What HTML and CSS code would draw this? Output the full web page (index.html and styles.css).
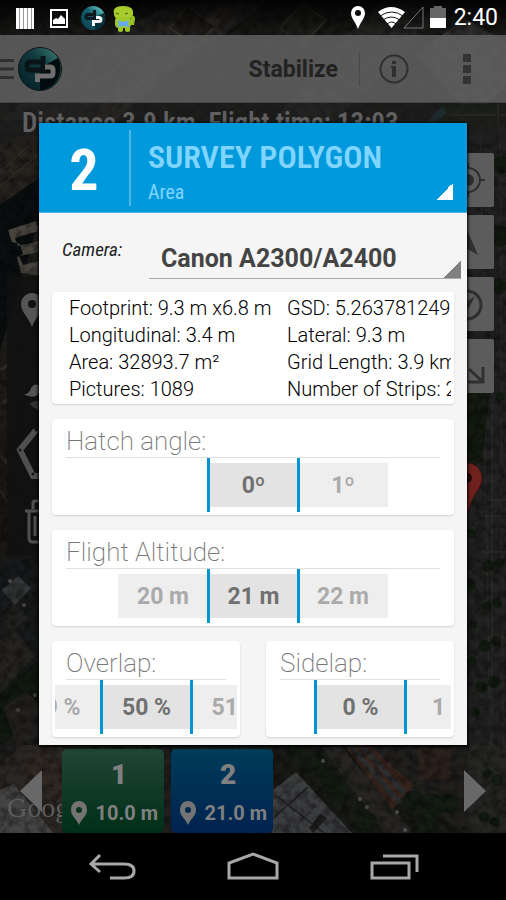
FILE: index.html
```
<!DOCTYPE html>
<html lang="en">
<head>
  <meta charset="UTF-8">
  <meta name="viewport" content="width=device-width, initial-scale=1.0">
  <title>DroidPlanner - Survey</title>
  <link rel="stylesheet" href="styles.css">
</head>
<body>
<div class="screen">

  <!-- Satellite map -->
  <svg class="map" viewBox="0 0 506 900" preserveAspectRatio="xMidYMid slice" aria-hidden="true">
    <defs>
      <linearGradient id="shade" x1="0" y1="0" x2="0" y2="1">
        <stop offset="0" stop-color="#000" stop-opacity=".9"/>
        <stop offset="1" stop-color="#000" stop-opacity="0"/>
      </linearGradient>
      <filter id="terrain" x="0" y="0" width="100%" height="100%">
        <feTurbulence type="fractalNoise" baseFrequency=".12" numOctaves="4" seed="7"/>
        <feColorMatrix values="0 0 0 0 0  0 0 0 0 0  0 0 0 0 0  2.4 0 0 0 -.9"/>
      </filter>
    </defs>
    <rect width="506" height="900" fill="#1c1c1a"/>
    <path d="M0 120 110 35 180 0h90L110 120z" fill="#2b2927"/>
    <path d="M85 125 225 0h22L110 125z" fill="#33302d"/>
    <path d="M95 125 232 0M104 125 240 0" stroke="#443f3a" stroke-width="1"/>
    <path d="M275 120 330 50 385 0h70L330 125z" fill="#2a2927"/>
    <path d="M170 28 187 6l28 20-19 20z" fill="#25221f" stroke="#3c372f" stroke-width="2"/>
    <path d="M280 28l22-24 24 16-24 26z" fill="#22231f" stroke="#32302a" stroke-width="2"/>
    <path d="M415 55 465 18 506 42v46l-35 27z" fill="#383634"/>
    <path d="M440 104h66v50h-66z" fill="#182012"/>
    <path d="M450 115h56M498 104v50" stroke="#34352c" stroke-width="2"/>
    <path d="M427 121l15-14 5 6-15 12z" fill="#1c4048"/>
    <path d="M0 145 39 128v52L0 205z" fill="#26221e"/>
    <path d="M0 172 39 136M0 186 39 154" stroke="#3b362f" stroke-width="1"/>
    <path d="M0 205 39 178v42L0 350z" fill="#0a0e0f"/>
    <path d="M8 230l28-9 3 10-24 7 3 8 21-5v11l-20 4 4 9 16-4v14l-18-2-4-16 6-3-3-10-8-2z" fill="#48443d"/>
    <path d="M0 350 39 320v90L0 435z" fill="#1d1a17"/>
    <path d="M0 371 39 341M0 405 39 374" stroke="#2d2924" stroke-width="3"/>
    <path d="M0 435 39 415v140L0 590z" fill="#1a1816"/>
    <path d="M0 455l39 45M0 490l28 45" stroke="#282521" stroke-width="3"/>
    <path d="M0 565 39 530v130L0 690z" fill="#17191a"/>
    <path d="M2 590l16-14 13 12-16 17z" fill="#333536"/>
    <path d="M0 618l14-14 14 13-17 16z" fill="#22211f"/>
    <path d="M0 640l16-10 18 27-34 36z" fill="#252320"/>
    <path d="M0 693l39-33v58L0 745z" fill="#10180f"/>
    <path d="M3 708l22-17 14 13v30L17 745z" fill="#22201e"/>
    <g fill="#4a463f"><circle cx="18" cy="710" r="2"/><circle cx="10" cy="581" r="2"/><circle cx="24" cy="605" r="2"/><circle cx="35" cy="695" r="2"/></g>
    <path d="M466 125h40v620h-40z" fill="#202120"/>
    <path d="M480 125l10 620M500 125l3 620" stroke="#2d2c2a" stroke-width="1"/>
    <path d="M466 391h24l-8 70-16 12z" fill="#151b10"/>
    <path d="M492 400v345M484 500h22M484 516h22M482 552h24" stroke="#33322e" stroke-width="1"/>
    <g fill="#121a10">
      <circle cx="501" cy="165" r="9"/><circle cx="499" cy="236" r="11"/><circle cx="499" cy="286" r="8"/><circle cx="500" cy="397" r="5"/>
      <circle cx="475" cy="421" r="9"/><circle cx="474" cy="448" r="8"/><circle cx="471" cy="534" r="5"/><circle cx="488" cy="566" r="6"/>
      <circle cx="500" cy="563" r="5"/><circle cx="470" cy="585" r="6"/><circle cx="487" cy="607" r="5"/><circle cx="497" cy="603" r="5"/>
      <circle cx="485" cy="646" r="6"/><circle cx="496" cy="641" r="5"/><circle cx="481" cy="687" r="6"/><circle cx="494" cy="682" r="6"/>
      <circle cx="475" cy="712" r="5"/><circle cx="473" cy="625" r="4"/><circle cx="472" cy="662" r="5"/>
    </g>
    <path d="M0 745h506v88H0z" fill="#201f1e"/>
    <path d="M0 765l22-20h41v88H46L16 790 0 806z" fill="#2b2724"/>
    <path d="M0 790l14-6 39 49H0z" fill="#444445"/>
    <path d="M20 770l20-22 22 18v38z" fill="#302823"/>
    <path d="M272 747h80l110 86H272z" fill="#181a16"/>
    <path d="M272 791l24-19 56 61h-80z" fill="#3c3d3f"/>
    <path d="M278 797l46 36M272 819l36-32" stroke="#262728" stroke-width="2"/>
    <path d="M309 828l11-14 7 4-14 15z" fill="#1b1b1c"/>
    <path d="M322 747h20l72 86h-30z" fill="#262523"/>
    <path d="M344 745l25 0 45 40-22 24z" fill="#38251e"/>
    <path d="M350 745l50 58M361 745l43 48" stroke="#2c2d2f" stroke-width="5"/>
    <path d="M418 748h33v32h-33z" fill="#2b211d"/>
    <path d="M469 745h37v88h-37z" fill="#252523"/>
    <g fill="#131b12">
      <circle cx="316" cy="765" r="10"/><circle cx="329" cy="777" r="9"/><circle cx="337" cy="791" r="10"/><circle cx="365" cy="822" r="12"/>
      <circle cx="414" cy="801" r="10"/><circle cx="431" cy="806" r="13"/><circle cx="425" cy="824" r="12"/><circle cx="449" cy="803" r="10"/>
      <circle cx="487" cy="774" r="5"/><circle cx="497" cy="780" r="6"/><circle cx="484" cy="817" r="5"/><circle cx="495" cy="822" r="5"/><circle cx="296" cy="747" r="8"/>
    </g>
    <g fill="#555"><circle cx="323" cy="761" r="2"/><circle cx="360" cy="799" r="2"/><circle cx="367" cy="807" r="2"/><circle cx="397" cy="812" r="2"/><circle cx="405" cy="830" r="2"/></g>
    <rect width="506" height="900" filter="url(#terrain)" opacity=".4"/>
    <rect width="506" height="40" fill="url(#shade)"/>
  </svg>

  <!-- Status bar -->
  <div class="status-bar">
    <svg class="notifications" viewBox="0 0 120 28" width="120" height="28" aria-hidden="true">
      <defs>
        <linearGradient id="teal" x1="1" y1="0" x2="0" y2="1">
          <stop offset="0" stop-color="#7fe0d8"/><stop offset=".45" stop-color="#12606e"/><stop offset="1" stop-color="#0a3c4a"/>
        </linearGradient>
      </defs>
      <path d="M0 4h18v21H0z" fill="#999"/>
      <path d="M0 4h3v21H0zM4 4h3v21H4zM8 4h3v21H8zM12 4h3v21h-3zM16 4h2v21h-2z" fill="#fff"/>
      <path d="M35 6h16v17H35z" fill="none" stroke="#fff" stroke-width="2"/>
      <path d="M37 20v-4l3-2 2 1 3-4 4 4v5z" fill="#fff"/>
      <circle cx="77" cy="14" r="12" fill="url(#teal)"/>
      <path d="M77 14l11-5a12 12 0 0 1-9 17z" fill="#04303a"/>
      <path d="M78.500 6v8.500H72q-2 0-2-2t2-2h6" fill="none" stroke="#0c181c" stroke-width="3"/>
      <path d="M77.500 22v-4.500H83q2 0 2-2t-2-2h-3" fill="none" stroke="#f4f4f4" stroke-width="3"/>
      <path d="M98 10q-2-8 9-8t10 8q0 4-4 5h-11q-4-1-4-5z" fill="#a8cc2c"/>
      <rect x="99" y="13" width="16" height="11" rx="4" fill="#a0c828"/>
      <path d="M115 12q4-1 4 3l-1 6h-4z" fill="#98c022"/>
      <path d="M102 22h5v5q-3 2-5 0zM109 22h5v5q-2 2-5 0z" fill="#9cc424"/>
      <path d="M100 9l3 1M109 10l3-1" stroke="#3c5c10"/>
      <path d="M101 16l6 2 6-2-1 4 2 3-7-1-6 1 2-3z" fill="#67a9f5"/>
    </svg>
    <svg class="signals" viewBox="0 0 98 28" width="98" height="28" aria-hidden="true">
      <path fill-rule="evenodd" d="M8 2a7 7 0 0 1 7 7c0 5-4 8-7 16C5 17 1 14 1 9a7 7 0 0 1 7-7zm0 4a3 3 0 1 0 0 6 3 3 0 0 0 0-6z" fill="#fff"/>
      <path d="M28 8q13-10 27 0L41.500 24z" fill="#fff"/>
      <path d="M30 12q12-8 23 0M33 16q8-6 17 0M37 20q5-4 9 0" fill="none" stroke="#111" stroke-width="1"/>
      <path d="M54 24h19V3z" fill="none" stroke="#777" stroke-width="1"/>
      <path d="M80 4h4V2h8v2h4v10H80z" fill="#666"/><path d="M80 14h16v10H80z" fill="#fff"/>
    </svg>
    <span class="clock">2:40</span>
  </div>

  <!-- Action bar -->
  <header class="action-bar">
    <button class="home-button" aria-label="Open drawer">
      <svg viewBox="0 0 64 46" width="64" height="46" aria-hidden="true">
        <defs>
          <linearGradient id="logo" x1=".9" y1=".1" x2=".1" y2=".8">
            <stop offset="0" stop-color="#37756e"/><stop offset=".4" stop-color="#123d40"/><stop offset="1" stop-color="#07242b"/>
          </linearGradient>
        </defs>
        <path d="M0 14.500h14M0 23h14M0 31.500h14" stroke="#303030" stroke-width="3"/>
        <circle cx="40" cy="23" r="21.500" fill="url(#logo)" stroke="#0a1518" stroke-width="1"/>
        <path d="M40 22l18-10a22 22 0 0 1-18 32z" fill="#020b0d"/>
        <path d="M43 10v14H30q-3 0-3-3v-2q0-3 3-3h13" fill="none" stroke="#0b1416" stroke-width="5"/>
        <path d="M37.500 36v-6H50q3 0 3-3v-3q0-3-3-3h-5" fill="none" stroke="#6e6e6e" stroke-width="5"/>
      </svg>
    </button>
    <button class="mode-button">Stabilize</button>
    <button class="info-button" aria-label="Info">
      <svg viewBox="0 0 30 30" width="30" height="30" aria-hidden="true">
        <circle cx="15" cy="15" r="13.500" fill="none" stroke="#303030" stroke-width="2"/>
        <path d="M13 7h4v3h-4zM12 12h5v11h-4v-9h-1z" fill="#303030"/>
      </svg>
    </button>
    <button class="more-button" aria-label="More options"><i></i><i></i><i></i></button>
  </header>

  <!-- Map area -->
  <main class="map-area">
    <p class="telemetry">Distance 3.9 km, Flight time: 13:03</p>

    <nav class="edit-tools" aria-label="Mission tools">
      <svg viewBox="0 0 60 280" width="60" height="280" aria-hidden="true">
        <path fill-rule="evenodd" d="M25 17c6 0 11 5 11 11 0 8-7 12-11 23-4-11-11-15-11-23 0-6 5-11 11-11zm0 7a4 4 0 1 0 0 8 4 4 0 0 0 0-8z" fill="#555"/>
        <path d="M16 118q6 1 8-6 3-5 8-3v8q-4 7-16 1z" fill="#555"/>
        <path d="M23 128q4-5 12-2v8q-7 0-12-6z" fill="#333"/>
        <path d="M29 154 13 174l13 26h20" fill="none" stroke="#505050" stroke-width="6"/>
        <g fill="#151515"><circle cx="29" cy="154" r="1.500"/><circle cx="13" cy="174" r="1.500"/><circle cx="26" cy="198" r="1.500"/></g>
        <path d="M18 235h35M26 233v-6q0-2 2-2h14M22 236v26q0 4 4 4h20M28 240v20M35 240v20" fill="none" stroke="#505050" stroke-width="3"/>
      </svg>
    </nav>

    <div class="map-tools">
      <button aria-label="My location"><svg viewBox="0 0 54 54" width="54" height="54" aria-hidden="true"><circle cx="28" cy="27" r="12" fill="none" stroke="#2e2e2e" stroke-width="2"/><circle cx="28" cy="27" r="6" fill="#2e2e2e"/><path d="M40 27h5M28 10v5M28 39v5M11 27h5" stroke="#2e2e2e" stroke-width="2"/></svg></button>
      <button aria-label="Drone location"><svg viewBox="0 0 54 54" width="54" height="54" aria-hidden="true"><path d="M24 8l14 32-14-8-14 8z" fill="#303030"/></svg></button>
      <button aria-label="Compass"><svg viewBox="0 0 54 54" width="54" height="54" aria-hidden="true"><circle cx="27" cy="28" r="14" fill="none" stroke="#303030" stroke-width="3"/><path d="M35 19l-6 12-11 7 7-12z" fill="#303030"/></svg></button>
      <button aria-label="Zoom to fit"><svg viewBox="0 0 54 54" width="54" height="54" aria-hidden="true"><path d="M28 43h15V28M43 43 29 30M11 28V12h15" fill="none" stroke="#303030" stroke-width="3"/></svg></button>
    </div>

    <svg class="map-marker" viewBox="0 0 32 54" width="32" height="54" aria-hidden="true">
      <path d="M16 1c9 0 15 7 15 15 0 12-11 16-14 36C14 32 1 28 1 16 1 8 7 1 16 1z" fill="#6e211d" stroke="#3c1210"/>
      <circle cx="16" cy="16" r="5" fill="#230808"/>
    </svg>
  </main>

  <!-- Mission list -->
  <section class="mission-list" aria-label="Mission items">
    <span class="attribution">Google</span>
    <button class="scroll-button" aria-label="Previous"><svg viewBox="0 0 22 42" width="22" height="42" aria-hidden="true"><path d="M22 0v42L0 21z" fill="#686868"/></svg></button>
    <ol class="mission-items">
      <li class="mission-item">
        <b>1</b>
        <span><svg viewBox="0 0 18 24" width="18" height="24" aria-hidden="true"><path fill-rule="evenodd" d="M9 0c5 0 8 4 8 9 0 6-5 8-8 15C6 17 1 15 1 9c0-5 3-9 8-9zm0 6a3 3 0 1 0 0 6 3 3 0 0 0 0-6z" fill="#747474"/></svg>10.0 m</span>
      </li>
      <li class="mission-item selected">
        <b>2</b>
        <span><svg viewBox="0 0 18 24" width="18" height="24" aria-hidden="true"><path fill-rule="evenodd" d="M9 0c5 0 8 4 8 9 0 6-5 8-8 15C6 17 1 15 1 9c0-5 3-9 8-9zm0 6a3 3 0 1 0 0 6 3 3 0 0 0 0-6z" fill="#747474"/></svg>21.0 m</span>
      </li>
    </ol>
    <button class="scroll-button" aria-label="Next"><svg viewBox="0 0 22 42" width="22" height="42" aria-hidden="true"><path d="M0 0v42l22-21z" fill="#686868"/></svg></button>
  </section>

  <!-- Navigation bar -->
  <nav class="nav-bar">
    <button aria-label="Back"><svg viewBox="0 0 54 30" width="54" height="30" aria-hidden="true"><path d="M16 3 7 12l9 8M7 12h33q10 0 10 7t-10 7H26" fill="none" stroke="#a8a8a8" stroke-width="3"/></svg></button>
    <button aria-label="Home"><svg viewBox="0 0 54 30" width="54" height="30" aria-hidden="true"><path d="M3 26V11L27 2l24 9v15z" fill="none" stroke="#a8a8a8" stroke-width="3"/></svg></button>
    <button aria-label="Recent apps"><svg viewBox="0 0 54 30" width="54" height="30" aria-hidden="true"><path d="M4 11h37v15H4zM15 4h34v16" fill="none" stroke="#a8a8a8" stroke-width="3"/></svg></button>
  </nav>

  <!-- Survey dialog -->
  <div class="overlay">
    <div class="dialog" role="dialog" aria-labelledby="dialogTitle">
      <div class="dialog-header">
        <span class="item-number">2</span>
        <div class="item-type">
          <h1 id="dialogTitle">SURVEY POLYGON</h1>
          <p>Area</p>
        </div>
        <button class="corner" aria-label="Change item type"></button>
      </div>

      <div class="dialog-body">
        <div class="camera-row">
          <label for="camera">Camera:</label>
          <div class="spinner">
            <select id="camera">
              <option>Canon A2300/A2400</option>
            </select>
          </div>
        </div>

        <div class="card details">
          <ul>
            <li>Footprint: 9.3 m x6.8 m</li>
            <li>Longitudinal: 3.4 m</li>
            <li>Area: 32893.7 m²</li>
            <li>Pictures: 1089</li>
          </ul>
          <ul>
            <li>GSD: 5.263781249</li>
            <li>Lateral: 9.3 m</li>
            <li>Grid Length: 3.9 km</li>
            <li>Number of Strips: 24</li>
          </ul>
        </div>

        <section class="card">
          <h2>Hatch angle:</h2>
          <div class="wheel">
            <span class="blank"></span>
            <button class="current">0º</button>
            <button>1º</button>
          </div>
        </section>

        <section class="card">
          <h2>Flight Altitude:</h2>
          <div class="wheel">
            <button>20 m</button>
            <button class="current">21 m</button>
            <button>22 m</button>
          </div>
        </section>

        <div class="card-row">
          <section class="card">
            <h2>Overlap:</h2>
            <div class="wheel">
              <button>49 %</button>
              <button class="current">50 %</button>
              <button>51 %</button>
            </div>
          </section>
          <section class="card">
            <h2>Sidelap:</h2>
            <div class="wheel">
              <span class="blank"></span>
              <button class="current">0 %</button>
              <button>1 %</button>
            </div>
          </section>
        </div>
      </div>
    </div>
  </div>

</div>
</body>
</html>
```

FILE: styles.css
```
* {
  box-sizing: border-box;
}

body {
  margin: 0;
  background: #000;
  font-family: Roboto, "Noto Sans", sans-serif;
}

h1, h2, p, ul, ol {
  margin: 0;
  padding: 0;
  list-style: none;
}

button {
  padding: 0;
  border: none;
  background: none;
  font-family: inherit;
  cursor: pointer;
}

svg {
  display: block;
}

.screen {
  position: relative;
  display: flex;
  flex-direction: column;
  min-height: 100vh;
  overflow: hidden;
}

.map {
  position: absolute;
  top: 0;
  left: 0;
  width: 100%;
  height: 100%;
  z-index: -1;
}

/* status bar */
.status-bar {
  display: flex;
  align-items: center;
  height: 35px;
  padding: 0 8px 0 16px;
  color: #fff;
}

.signals {
  margin-left: auto;
  margin-right: 6px;
}

.clock {
  font-size: 23px;
  line-height: 37px;
}

/* action bar */
.action-bar {
  display: flex;
  align-items: center;
  height: 68px;
  padding-right: 35px;
  background: rgba(98, 98, 98, 0.85);
  border-bottom: 1px solid #444;
}

.mode-button {
  height: 34px;
  margin-left: auto;
  padding: 2px 21px 0 0;
  border-right: 1px solid #484848;
  color: #222;
  font-size: 23px;
  font-weight: 700;
}

.info-button {
  margin: 0 54px 0 19px;
}

.more-button i {
  display: block;
  width: 8px;
  height: 8px;
  background: #333;
}

.more-button i + i {
  margin-top: 3px;
}

/* map area */
.map-area {
  position: relative;
  flex: 1;
}

.telemetry {
  height: 40px;
  padding-left: 22px;
  background: rgba(30, 30, 30, 0.6);
  color: #606060;
  font-family: "Roboto Condensed", "Liberation Sans Narrow", Roboto, sans-serif;
  font-size: 27px;
  font-weight: 600;
  line-height: 40px;
  white-space: nowrap;
}

.edit-tools {
  position: absolute;
  top: 173px;
  left: 7px;
  background: rgba(17, 17, 17, 0.85);
  border-radius: 4px;
}

.map-tools {
  position: absolute;
  top: 50px;
  right: 12px;
  display: flex;
  flex-direction: column;
  gap: 8px;
}

.map-tools button {
  background: #5c5c5c;
  border-radius: 2px;
}

.map-marker {
  position: absolute;
  top: 359px;
  right: 23px;
}

/* mission list */
.mission-list {
  position: relative;
  display: flex;
  align-items: center;
  height: 85px;
  padding: 0 20px;
}

.attribution {
  position: absolute;
  left: 7px;
  bottom: 9px;
  color: #5c5c5c;
  font-family: "Liberation Serif", serif;
  font-size: 28px;
  line-height: 32px;
}

.scroll-button {
  position: relative;
}

.mission-items {
  position: relative;
  display: flex;
  flex: 1;
  gap: 7px;
  padding-left: 20px;
}

.mission-item {
  width: 102px;
  height: 84px;
  padding-top: 8px;
  border-radius: 5px;
  background: linear-gradient(#214535, #002f17);
  color: #808080;
  font-weight: 700;
}

.mission-item.selected {
  background: linear-gradient(#003c59, #002250);
}

.mission-item b {
  display: block;
  padding-left: 12px;
  font-size: 28px;
  line-height: 36px;
  text-align: center;
}

.mission-item span {
  display: flex;
  align-items: center;
  justify-content: space-between;
  padding: 0 6px 0 8px;
  font-size: 20px;
  line-height: 40px;
}

/* navigation bar */
.nav-bar {
  display: flex;
  align-items: center;
  justify-content: center;
  gap: 88px;
  height: 67px;
  background: #000;
}

/* dialog */
.overlay {
  position: absolute;
  top: 35px;
  right: 0;
  bottom: 67px;
  left: 0;
  display: flex;
  align-items: center;
  justify-content: center;
  padding: 0 39px;
}

.dialog {
  width: 100%;
  background: #f5f5f5;
  box-shadow: 0 1px 3px 1px #000;
}

.dialog-header {
  display: flex;
  align-items: center;
  height: 90px;
  padding-right: 14px;
  background: #0099dc;
  border-bottom: 1px solid #4db5e6;
  font-family: "Roboto Condensed", "Liberation Sans Narrow", Roboto, sans-serif;
}

.item-number {
  width: 92px;
  padding-top: 4px;
  border-right: 2px solid #4db5e6;
  color: #fff;
  font-size: 58px;
  font-weight: 700;
  line-height: 72px;
  text-align: center;
}

.item-type {
  flex: 1;
  padding: 9px 0 0 17px;
  color: #80d5ff;
}

.item-type h1 {
  font-size: 32px;
  font-weight: 600;
  line-height: 40px;
  white-space: nowrap;
}

.item-type p {
  font-size: 20px;
  line-height: 30px;
}

.corner {
  align-self: flex-end;
  width: 17px;
  height: 17px;
  margin-bottom: 12px;
  background: linear-gradient(135deg, transparent 50%, #fff 50%);
}

.dialog-body {
  display: flex;
  flex-direction: column;
  gap: 15px;
  padding: 25px 13px 8px;
}

.camera-row {
  display: flex;
  gap: 28px;
  height: 41px;
  margin: 0 -7px -2px 0;
  padding-left: 10px;
}

.camera-row label {
  width: 59px;
  color: #222;
  font-family: "Roboto Condensed", "Liberation Sans Narrow", Roboto, sans-serif;
  font-size: 19px;
  font-style: italic;
  line-height: 24px;
  white-space: nowrap;
}

.spinner {
  flex: 1;
  background: linear-gradient(135deg, transparent 50%, #808080 50%) right bottom / 17px 17px no-repeat;
  border-bottom: 1px solid #aaa;
}

.spinner select {
  appearance: none;
  width: 100%;
  height: 40px;
  padding: 0 12px;
  border: none;
  background: none;
  color: #444;
  font-family: inherit;
  font-size: 25px;
  font-weight: 700;
}

.card {
  padding: 3px;
  background: #fff;
  border-radius: 4px;
  box-shadow: 0 1px 2px rgba(0, 0, 0, 0.15);
}

.details {
  display: flex;
  height: 112px;
  padding: 3px 3px 1px 17px;
}

.details ul {
  flex: 0 0 218px;
}

.details ul + ul {
  flex: 1;
  min-width: 0;
  overflow: hidden;
}

.details li {
  color: #000;
  font-size: 20px;
  font-weight: 300;
  line-height: 27px;
  white-space: nowrap;
}

.card h2 {
  margin: 0 11px;
  padding-top: 3px;
  border-bottom: 1px solid #e0e0e0;
  color: #777;
  font-size: 26px;
  font-weight: 200;
  line-height: 32px;
}

.wheel {
  display: flex;
  align-items: center;
  justify-content: center;
  height: 54px;
  overflow: hidden;
}

.wheel button,
.wheel .blank {
  flex: 0 0 90px;
  height: 44px;
}

.wheel button {
  background: #eee;
  color: #aaa;
  font-size: 23px;
  font-weight: 700;
}

.wheel .current {
  position: relative;
  flex-basis: 93px;
  height: 54px;
  margin: 0 -2px 0 -1px;
  border: solid #0095d0;
  border-width: 0 3px;
  background: linear-gradient(#e3e3e3, #e3e3e3) center / 100% 44px no-repeat;
  color: #707070;
}

.card-row {
  display: flex;
  gap: 26px;
}

.card-row .card {
  flex: 1;
  min-width: 0;
}
```
